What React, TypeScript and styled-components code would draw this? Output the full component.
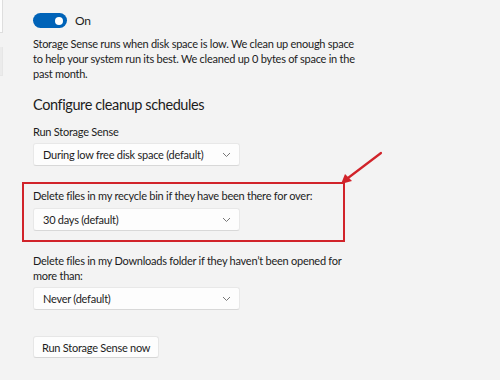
import React from 'react';
import styled, { createGlobalStyle } from 'styled-components';

const BG = '#f3f3f3';
const TEXT = '#1c1c1c';
const ACCENT = '#0063b8';
const RED = '#d1232a';

const GlobalStyle = createGlobalStyle`
  html, body {
    margin: 0;
    padding: 0;
    background: ${BG};
  }
  * {
    box-sizing: border-box;
  }
`;

const options = [
  {
    label: 'Run Storage Sense',
    value: 'During low free disk space (default)',
  },
];

const App = () => {
  return (
    <>
      <GlobalStyle />
      <Page>
        <Sidebar>
          <NavItem active />
          <NavItem />
        </Sidebar>
        <Main>
          <ToggleRow>
            <Toggle>
              <Knob />
            </Toggle>
            <ToggleText>On</ToggleText>
          </ToggleRow>
          <Description>
            Storage Sense runs when disk space is low. We clean up enough space to help your system run its best. We
            cleaned up 0 bytes of space in the past month.
          </Description>
          <Heading>Configure cleanup schedules</Heading>

          {options.map((o) => (
            <Field key={o.label}>
              <Label>{o.label}</Label>
              <Dropdown value={o.value} />
            </Field>
          ))}

          <Highlight>
            <Label>Delete files in my recycle bin if they have been there for over:</Label>
            <Dropdown value="30 days (default)" />
          </Highlight>

          <DownloadsField>
            <Label>Delete files in my Downloads folder if they haven’t been opened for more than:</Label>
            <Dropdown value="Never (default)" />
          </DownloadsField>

          <RunButton>Run Storage Sense now</RunButton>
        </Main>
        <Arrow width="50" height="40" viewBox="0 0 50 40">
          <line x1="45" y1="2" x2="12" y2="27" stroke={RED} strokeWidth="2.2" strokeLinecap="round" />
          <polygon points="5,33 9,23 16,30" fill={RED} />
        </Arrow>
      </Page>
    </>
  );
};

const Dropdown = ({ value }: { value: string }) => (
  <Select>
    <SelectValue>{value}</SelectValue>
    <svg width="9" height="6" viewBox="0 0 9 6">
      <path d="M1 1 L4.5 4.5 L8 1" fill="none" stroke="#777" strokeWidth="1" />
    </svg>
  </Select>
);

export default App;

const Page = styled.div`
  position: relative;
  width: 500px;
  height: 380px;
  overflow: hidden;
  display: flex;
  flex-direction: row;
  background: ${BG};
  font-family: Lato, 'Noto Sans', sans-serif;
  color: ${TEXT};
`;

const Sidebar = styled.div`
  width: 3px;
  display: flex;
  flex-direction: column;
  gap: 12px;
  flex-shrink: 0;
`;

const NavItem = styled.div<{ active?: boolean }>`
  height: ${(p) => (p.active ? '33px' : '29px')};
  margin-top: ${(p) => (p.active ? '0' : '2px')};
  background: ${(p) => (p.active ? '#fdfdfd' : '#ebebeb')};
  border: 1px solid ${(p) => (p.active ? '#dedede' : '#e6e6e6')};
  border-left: none;
  border-top: none;
`;

const Main = styled.div`
  display: flex;
  flex-direction: column;
  padding: 13px 0 0 30px;
  letter-spacing: -0.25px;
`;

const ToggleRow = styled.div`
  display: flex;
  flex-direction: row;
  align-items: center;
  gap: 8px;
  height: 15px;
`;

const Toggle = styled.div`
  width: 34px;
  height: 15px;
  border-radius: 8px;
  background: ${ACCENT};
  display: flex;
  align-items: center;
  justify-content: flex-end;
  padding-right: 4px;
`;

const Knob = styled.div`
  width: 8px;
  height: 8px;
  border-radius: 50%;
  background: #ffffff;
`;

const ToggleText = styled.span`
  font-size: 12px;
`;

const Description = styled.p`
  margin: 8px 0 0;
  width: 330px;
  font-size: 11px;
  line-height: 15px;
`;

const Heading = styled.h2`
  margin: 13px 0 0;
  font-size: 14.5px;
  font-weight: 400;
  line-height: 22px;
  letter-spacing: -0.4px;
`;

const Field = styled.div`
  display: flex;
  flex-direction: column;
  gap: 4px;
  margin-top: 8px;
`;

const Label = styled.div`
  font-size: 11px;
  line-height: 15px;
  width: 320px;
`;

const Highlight = styled.div`
  display: flex;
  flex-direction: column;
  gap: 5px;
  width: 323px;
  margin: 16px 0 0 -11px;
  padding: 4px 9px 9px;
  border: 2px solid ${RED};
`;

const DownloadsField = styled(Field)`
  margin-top: 11px;
`;

const Select = styled.div`
  width: 207px;
  height: 23px;
  display: flex;
  flex-direction: row;
  align-items: center;
  justify-content: space-between;
  padding: 0 8px 0 9px;
  background: #fdfdfd;
  border: 1px solid #e8e8e8;
  border-bottom-color: #d8d8d8;
  border-radius: 3px;
`;

const SelectValue = styled.span`
  font-size: 11px;
`;

const RunButton = styled.button`
  align-self: flex-start;
  margin-top: 26px;
  height: 22px;
  padding: 0 8px;
  font-family: inherit;
  font-size: 11px;
  letter-spacing: inherit;
  color: ${TEXT};
  background: #fdfdfd;
  border: 1px solid #e6e6e6;
  border-bottom-color: #d6d6d6;
  border-radius: 3px;
`;

const Arrow = styled.svg`
  position: absolute;
  left: 336px;
  top: 151px;
`;
